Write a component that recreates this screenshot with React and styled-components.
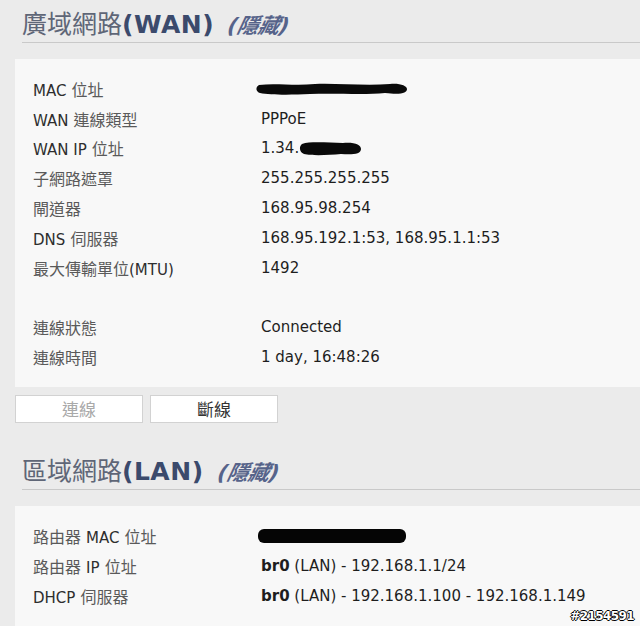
import React from 'react';
import styled, { createGlobalStyle } from 'styled-components';

const GlobalStyle = createGlobalStyle`
    html, body {
        margin: 0;
        padding: 0;
        background: #ebebeb;
    }
    body {
        font-family: 'DejaVu Sans', 'Noto Sans CJK TC', sans-serif;
        overflow: hidden;
    }
`;

const wanRows = [
    { label: ['MAC', ' 位址'], value: 'mac' },
    { label: ['WAN', ' 連線類型'], value: 'PPPoE' },
    { label: ['WAN IP', ' 位址'], value: 'ip' },
    { label: ['', '子網路遮罩'], value: '255.255.255.255' },
    { label: ['', '閘道器'], value: '168.95.98.254' },
    { label: ['DNS', ' 伺服器'], value: '168.95.192.1:53, 168.95.1.1:53' },
    { label: ['', '最大傳輸單位', '(MTU)'], value: '1492' },
    null,
    { label: ['', '連線狀態'], value: 'Connected' },
    { label: ['', '連線時間'], value: '1 day, 16:48:26' },
];

const RedactMac = () => (
    <svg width="154" height="16" viewBox="0 0 154 16">
        <path
            d="M4 4 C 20 2, 40 5, 60 3 C 80 2, 110 5, 135 3 C 145 2, 152 5, 152 8 C 152 12, 146 14, 130 12 C 110 14, 80 12, 55 13 C 35 14, 15 14, 5 12 C 1 11, 0 6, 4 4 Z"
            fill="#0a0a0a"
        />
    </svg>
);

const RedactIp = () => (
    <svg width="64" height="17" viewBox="0 0 64 17">
        <path
            d="M3 4 C 12 1, 30 3, 44 3 C 56 2, 62 5, 62 9 C 62 14, 54 15, 42 14 C 30 15, 14 16, 5 14 C 0 12, 0 6, 3 4 Z"
            fill="#0a0a0a"
        />
    </svg>
);

const RedactBar = () => (
    <svg width="150" height="16" viewBox="0 0 150 16">
        <rect x="1" y="1" width="148" height="14" rx="6" fill="#050505" />
    </svg>
);

const renderWanValue = (value) => {
    if (value === 'mac') {
        return (
            <Shift $by={6}>
                <RedactMac />
            </Shift>
        );
    }
    if (value === 'ip') {
        return (
            <>
                1.34.
                <RedactIp />
            </>
        );
    }
    return value;
};

const App = () => {
    return (
        <>
            <GlobalStyle />
            <Page>
                <SectionTitle>
                    <span className='cjk'>廣域網路</span>
                    <strong>(WAN)</strong> <em>(隱藏)</em>
                </SectionTitle>
                <Panel>
                    <InfoGrid>
                        {wanRows.map((row, index) => {
                            if (!row) {
                                return <Spacer key={index} />;
                            }
                            return (
                                <React.Fragment key={index}>
                                    <Label>
                                        {row.label[0]}
                                        <Cjk>{row.label[1]}</Cjk>
                                        {row.label[2]}
                                    </Label>
                                    <Value>{renderWanValue(row.value)}</Value>
                                </React.Fragment>
                            );
                        })}
                    </InfoGrid>
                </Panel>
                <ButtonRow>
                    <Button disabled>連線</Button>
                    <Button>斷線</Button>
                </ButtonRow>

                <SectionTitle $top={24}>
                    <span className='cjk'>區域網路</span>
                    <strong>(LAN)</strong> <em>(隱藏)</em>
                </SectionTitle>
                <Panel>
                    <InfoGrid>
                        <Label>
                            <Cjk>路由器 </Cjk>MAC<Cjk> 位址</Cjk>
                        </Label>
                        <Value>
                            <Shift $by={4}>
                                <RedactBar />
                            </Shift>
                        </Value>
                        <Label>
                            <Cjk>路由器 </Cjk>IP<Cjk> 位址</Cjk>
                        </Label>
                        <Value>
                            <b>br0</b>&nbsp;(LAN) - 192.168.1.1/24
                        </Value>
                        <Label>
                            DHCP<Cjk> 伺服器</Cjk>
                        </Label>
                        <Value>
                            <b>br0</b>&nbsp;(LAN) - 192.168.1.100 - 192.168.1.149
                        </Value>
                    </InfoGrid>
                    <Stamp>#2154591</Stamp>
                </Panel>
            </Page>
        </>
    );
};

export default App;

const Page = styled.div`
    display: flex;
    flex-direction: column;
    padding-left: 15px;
    min-height: 626px;
    box-sizing: border-box;
`;

const SectionTitle = styled.h2`
    margin: ${(p) => p.$top || 0}px 0 16px 7px;
    padding: 9px 0 0;
    height: 33px;
    border-bottom: 1px solid #c9c9c9;
    font-size: 25px;
    line-height: 32px;
    font-weight: normal;
    color: #3e4c6d;
    white-space: nowrap;

    .cjk {
        color: #5f6677;
    }

    strong {
        font-weight: bold;
        color: #3b4a6c;
        letter-spacing: 0.5px;
    }

    em {
        display: inline-block;
        margin-left: 6px;
        font-size: 21px;
        font-weight: bold;
        font-style: italic;
        color: #56638a;
        transform: skewX(-12deg);
    }
`;

const Panel = styled.div`
    position: relative;
    background: #f8f8f8;
    padding: 15px 0 14px 18px;
    flex: 1;
`;

const InfoGrid = styled.div`
    display: grid;
    grid-template-columns: 228px 1fr;
    grid-auto-rows: 29.8px;
    align-items: center;
    font-size: 15px;
`;

const Spacer = styled.div`
    grid-column: 1 / -1;
`;

const Label = styled.div`
    color: #2e2e2e;
    white-space: nowrap;
`;

const Cjk = styled.span`
    color: #5a5a5a;
    font-size: 16px;
`;

const Value = styled.div`
    display: flex;
    align-items: center;
    color: #1e1e1e;
    white-space: pre;

    b {
        font-weight: bold;
    }
`;

const Shift = styled.span`
    display: inline-flex;
    margin-left: -${(p) => p.$by}px;
`;

const ButtonRow = styled.div`
    display: flex;
    gap: 7px;
    margin-top: 8px;
`;

const Button = styled.button`
    box-sizing: border-box;
    width: 128px;
    height: 28px;
    padding: 0;
    background: #ffffff;
    border: 1px solid #d2d2d2;
    border-radius: 0;
    font-family: 'Noto Sans CJK TC', sans-serif;
    font-size: 17px;
    line-height: 26px;
    color: #333333;

    &:disabled {
        color: #a9a9a9;
    }
`;

const Stamp = styled.span`
    position: absolute;
    right: 6px;
    top: 103px;
    font-family: 'DejaVu Sans', sans-serif;
    font-size: 12px;
    font-weight: bold;
    letter-spacing: -0.6px;
    color: #ffffff;
    text-shadow: -1px 0 #000, 1px 0 #000, 0 -1px #000, 0 1px #000;
`;
